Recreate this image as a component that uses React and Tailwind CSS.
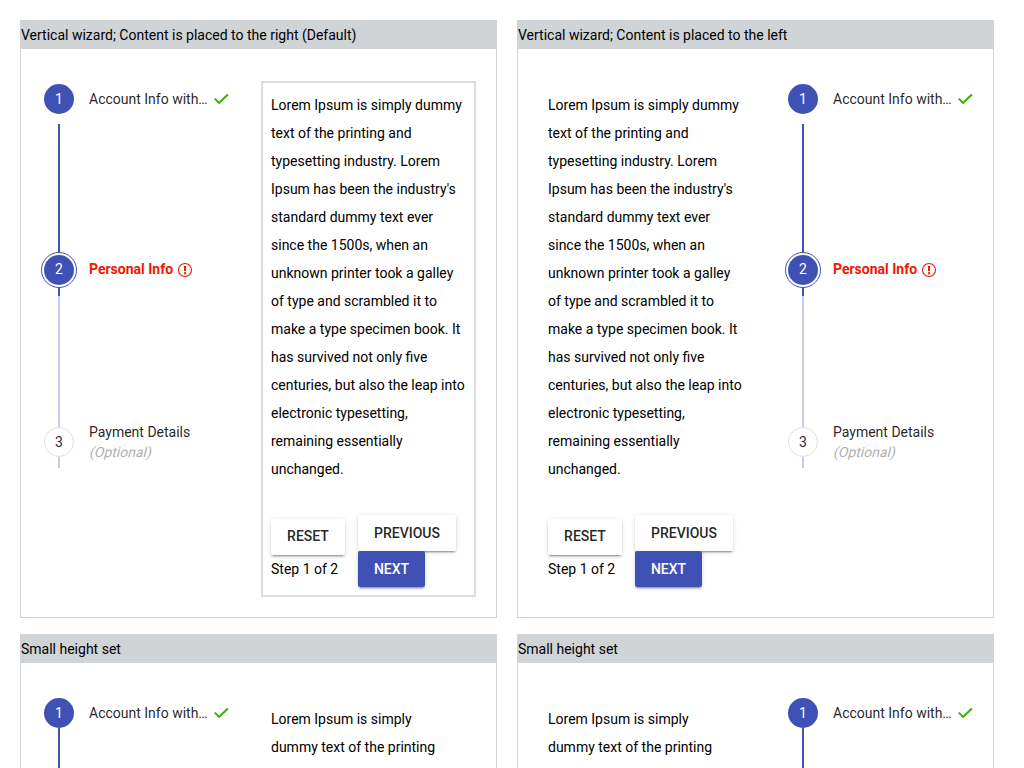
import React from "react";

const LOREM =
  "Lorem Ipsum is simply dummy text of the printing and typesetting industry. Lorem Ipsum has been the industry's standard dummy text ever since the 1500s, when an unknown printer took a galley of type and scrambled it to make a type specimen book. It has survived not only five centuries, but also the leap into electronic typesetting, remaining essentially unchanged.";

function CheckIcon() {
  return (
    <svg className="ml-1.5 size-4 shrink-0" viewBox="0 0 16 16" fill="none" stroke="#36b000" strokeWidth="2">
      <path d="M0.8 7.6 5.2 11.9 13.8 3.5" />
    </svg>
  );
}

function ErrorIcon() {
  return (
    <svg className="mt-0.5 ml-1 size-4 shrink-0" viewBox="0 0 16 16" fill="none" stroke="#f31700">
      <circle cx="8" cy="8" r="6.5" strokeWidth="1.1" />
      <path d="M8 4v5M8 10.2v2" strokeWidth="2" />
    </svg>
  );
}

function StepRow({ circle, height = "h-9", children }) {
  return (
    <div className={"flex items-center " + height}>
      <div className="flex w-9 justify-center">{circle}</div>
      <div className="ml-3 flex items-center whitespace-nowrap">{children}</div>
    </div>
  );
}

function Circle({ className = "", children }) {
  return (
    <div
      className={
        "flex size-[30px] items-center justify-center rounded-full bg-[#3f51b5] leading-5 text-white " + className
      }
    >
      {children}
    </div>
  );
}

function Steps({ compact }) {
  return (
    <div className="w-[190px] shrink-0 leading-5 text-black/87">
      <StepRow circle={<Circle>1</Circle>}>
        <span>Account Info with…</span>
        <CheckIcon />
      </StepRow>
      <div className={"ml-[17px] w-0.5 bg-[#3f51b5] " + (compact ? "-mt-[3px] h-[100px]" : "mt-[7px] h-32")} />
      <StepRow
        circle={
          <div className="flex size-9 shrink-0 items-center justify-center rounded-full border border-[#3f51b5]">
            <Circle className="pb-0.5">2</Circle>
          </div>
        }
      >
        <div className="flex items-center pb-0.5">
          <span className="font-bold text-[#f31700]">Personal Info</span>
          <ErrorIcon />
        </div>
      </StepRow>
      <div className="ml-[17px] h-2 w-0.5 bg-[#3f51b5]" />
      <div className="ml-[17px] h-[131px] w-0.5 bg-[#c5cae9]" />
      <StepRow
        height="h-[30px]"
        circle={
          <div className="flex size-[30px] items-center justify-center rounded-full border border-[#e0e0e0]">3</div>
        }
      >
        <div>
          <div>Payment Details</div>
          <div className="w-fit origin-[0_15px] -skew-x-[14deg] text-[#b0b0b0]">(Optional)</div>
        </div>
      </StepRow>
      <div className="ml-[17px] h-[11px] w-0.5 bg-[#c5cae9]" />
    </div>
  );
}

function Button({ primary, className, children }) {
  return (
    <button
      className={
        "h-9 rounded-[2px] text-sm font-medium shadow-[0_3px_1px_-2px_rgba(0,0,0,0.2),0_2px_2px_0_rgba(0,0,0,0.14),0_1px_5px_0_rgba(0,0,0,0.12)] " +
        (primary ? "bg-[#3f51b5] text-white " : "bg-white text-black/87 ") +
        className
      }
    >
      {children}
    </button>
  );
}

function Content({ outlined, compact }) {
  return (
    <div className={"w-[215px] shrink-0 border-2 p-2 " + (outlined ? "border-[#dcdcdc]" : "border-transparent")}>
      <p className={"leading-7 " + (compact ? "w-[178px]" : "w-[195px]")}>{LOREM}</p>
      <div className="mt-8 flex gap-[13px]">
        <div className="w-[74px] pt-1">
          <Button className="w-[74px] pb-0.5">RESET</Button>
          <div className="leading-7 whitespace-nowrap">Step 1 of 2</div>
        </div>
        <div className="flex flex-col items-start">
          <Button className="w-[98px]">PREVIOUS</Button>
          <Button primary className="w-[67px]">NEXT</Button>
        </div>
      </div>
    </div>
  );
}

function Card({ title, contentLeft, outlined, compact, className }) {
  return (
    <section className={"overflow-hidden border border-[#d0d4d7] " + className}>
      <h2 className="h-7 bg-[#d0d4d7] leading-7">{title}</h2>
      <div className={"flex items-start pt-8 pl-5 " + (contentLeft ? "gap-8" : "gap-[30px]")}>
        {contentLeft ? (
          <>
            <Content outlined={outlined} compact={compact} />
            <Steps compact={compact} />
          </>
        ) : (
          <>
            <Steps compact={compact} />
            <Content outlined={outlined} compact={compact} />
          </>
        )}
      </div>
    </section>
  );
}

export default function App() {
  return (
    <main className="h-screen overflow-hidden bg-white p-5 font-['Roboto',sans-serif] text-sm text-black">
      <div className="grid w-[974px] grid-cols-2 gap-x-5 gap-y-4">
        <Card
          className="h-[598px]"
          title="Vertical wizard; Content is placed to the right (Default)"
          outlined
        />
        <Card className="h-[598px]" title="Vertical wizard; Content is placed to the left" contentLeft />
        <Card className="h-[400px]" title="Small height set" compact />
        <Card className="h-[400px]" title="Small height set" contentLeft compact />
      </div>
    </main>
  );
}
